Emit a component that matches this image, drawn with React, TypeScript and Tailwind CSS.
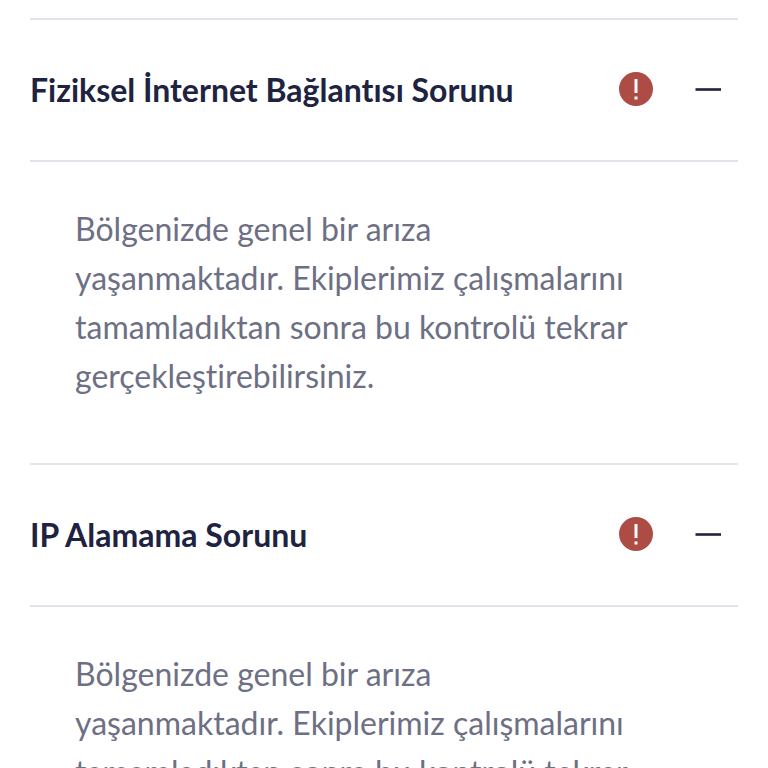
import { useState } from "react";

const message =
  "Bölgenizde genel bir arıza yaşanmaktadır. Ekiplerimiz çalışmalarını tamamladıktan sonra bu kontrolü tekrar gerçekleştirebilirsiniz.";

const items = [
  { id: "fiziksel", title: "Fiziksel İnternet Bağlantısı Sorunu" },
  { id: "ip", title: "IP Alamama Sorunu" },
];

function AlertIcon() {
  return (
    <svg className="size-9 shrink-0" viewBox="0 0 36 36" aria-hidden="true">
      <circle cx="18" cy="17" r="17" fill="#ad4b45" />
      <path d="M16.5 7h3v14h-3zM16.5 24.5h3v3h-3z" fill="#fff" />
    </svg>
  );
}

function ToggleIcon({ open }: { open: boolean }) {
  return (
    <svg className="size-7 shrink-0" viewBox="0 0 28 28" aria-hidden="true">
      <path d={open ? "M1.5 13.5h25.5" : "M1.5 13.5h25.5M14 1v25.5"} stroke="#20213f" strokeWidth="2.6" />
    </svg>
  );
}

function Item({ id, title }: { id: string; title: string }) {
  const [open, setOpen] = useState(true);
  return (
    <section className="border-t-2 border-[#e3e3ec]">
      <h2>
        <button
          type="button"
          aria-expanded={open}
          aria-controls={id}
          onClick={() => setOpen(!open)}
          className="flex h-35 w-full items-center pr-4 text-left text-[32px] font-bold text-[#20233f]"
        >
          <span className="flex-1">{title}</span>
          <AlertIcon />
          <span className="ml-10 flex">
            <ToggleIcon open={open} />
          </span>
        </button>
      </h2>
      {open && (
        <div id={id} className="border-t-2 border-[#e3e3ec] pt-[42px] pr-24 pb-[63px] pl-[45px]">
          <p className="text-[32px] leading-[49px] text-[#6d7084]">{message}</p>
        </div>
      )}
    </section>
  );
}

export default function App() {
  return (
    <main className="h-screen overflow-hidden bg-white px-[30px] pt-[18px] font-[Lato,sans-serif] [font-variant-ligatures:none]">
      {items.map((item) => (
        <Item key={item.id} {...item} />
      ))}
    </main>
  );
}
